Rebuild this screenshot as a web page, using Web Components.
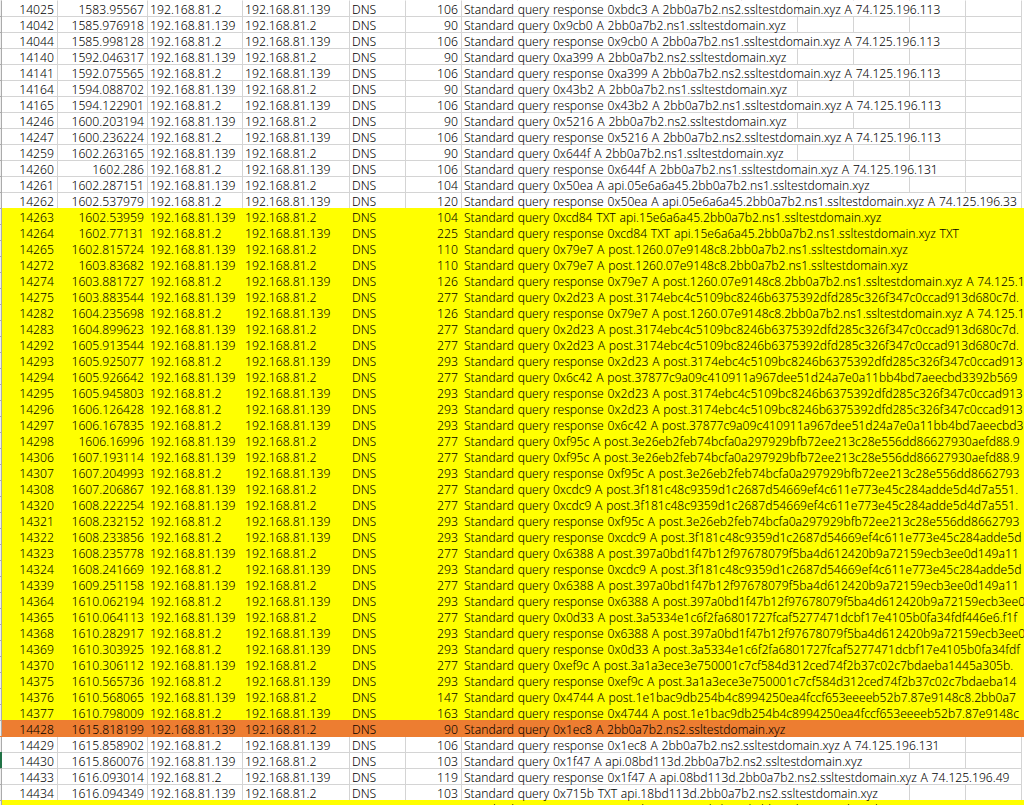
<!DOCTYPE html>
<html><head><meta charset="utf-8"><style>
html,body{margin:0;padding:0;height:805px;overflow:hidden;background:#fff}
body{font:300 12.2px/16px "Noto Sans","Liberation Sans",sans-serif;color:#000}
</style></head><body>
<packet-sheet></packet-sheet>
<script>
const Z={n1:'2bb0a7b2.ns1.ssltestdomain.xyz',n2:'2bb0a7b2.ns2.ssltestdomain.xyz'};
const P2D='post.3174ebc4c5109bc8246b6375392dfd285c326f347c0ccad913',
 P6C='post.37877c9a09c410911a967dee51d24a7e0a11bb4bd7aeecbd3',
 PF9='post.3e26eb2feb74bcfa0a297929bfb72ee213c28e556dd8662793',
 PCD='post.3f181c48c9359d1c2687d54669ef4c611e773e45c284adde5d',
 P63='post.397a0bd1f47b12f97678079f5ba4d612420b9a72159ecb3ee0',
 P0D='post.3a5334e1c6f2fa6801727fcaf5277471dcbf17e4105b0fa34fdf',
 PEF='post.3a1a3ece3e750001c7cf584d312ced74f2b37c02c7bdaeba14',
 P47='post.1e1bac9db254b4c8994250ea4fccf653eeeeb52b7.87e9148c',
 P79='post.1260.07e9148c8.2bb0a7b2.ns1.ssltestdomain.xyz';
/* no, time, kind (q/r), length, rest of the info text, fill */
const ROWS=[
[14025,'1583.95567','r',106,`0xbdc3 A ${Z.n2} A 74.125.196.113`],
[14042,'1585.976918','q',90,`0x9cb0 A ${Z.n1}`],
[14044,'1585.998128','r',106,`0x9cb0 A ${Z.n1} A 74.125.196.113`],
[14140,'1592.046317','q',90,`0xa399 A ${Z.n2}`],
[14141,'1592.075565','r',106,`0xa399 A ${Z.n2} A 74.125.196.113`],
[14164,'1594.088702','q',90,`0x43b2 A ${Z.n1}`],
[14165,'1594.122901','r',106,`0x43b2 A ${Z.n1} A 74.125.196.113`],
[14246,'1600.203194','q',90,`0x5216 A ${Z.n2}`],
[14247,'1600.236224','r',106,`0x5216 A ${Z.n2} A 74.125.196.113`],
[14259,'1602.263165','q',90,`0x644f A ${Z.n1}`],
[14260,'1602.286','r',106,`0x644f A ${Z.n1} A 74.125.196.131`],
[14261,'1602.287151','q',104,`0x50ea A api.05e6a6a45.${Z.n1}`],
[14262,'1602.537979','r',120,`0x50ea A api.05e6a6a45.${Z.n1} A 74.125.196.33`],
[14263,'1602.53959','q',104,`0xcd84 TXT api.15e6a6a45.${Z.n1}`,'y'],
[14264,'1602.77131','r',225,`0xcd84 TXT api.15e6a6a45.${Z.n1} TXT`,'y'],
[14265,'1602.815724','q',110,`0x79e7 A ${P79}`,'y'],
[14272,'1603.83682','q',110,`0x79e7 A ${P79}`,'y'],
[14274,'1603.881727','r',126,`0x79e7 A ${P79} A 74.125.1`,'y'],
[14275,'1603.883544','q',277,`0x2d23 A ${P2D}d680c7d.`,'y'],
[14282,'1604.235698','r',126,`0x79e7 A ${P79} A 74.125.1`,'y'],
[14283,'1604.899623','q',277,`0x2d23 A ${P2D}d680c7d.`,'y'],
[14292,'1605.913544','q',277,`0x2d23 A ${P2D}d680c7d.`,'y'],
[14293,'1605.925077','r',293,`0x2d23 A ${P2D}`,'y'],
[14294,'1605.926642','q',277,`0x6c42 A ${P6C}392b569`,'y'],
[14295,'1605.945803','r',293,`0x2d23 A ${P2D}`,'y'],
[14296,'1606.126428','r',293,`0x2d23 A ${P2D}`,'y'],
[14297,'1606.167835','r',293,`0x6c42 A ${P6C}`,'y'],
[14298,'1606.16996','q',277,`0xf95c A ${PF9}0aefd88.9`,'y'],
[14306,'1607.193114','q',277,`0xf95c A ${PF9}0aefd88.9`,'y'],
[14307,'1607.204993','r',293,`0xf95c A ${PF9}`,'y'],
[14308,'1607.206867','q',277,`0xcdc9 A ${PCD}4d7a551.`,'y'],
[14320,'1608.222254','q',277,`0xcdc9 A ${PCD}4d7a551.`,'y'],
[14321,'1608.232152','r',293,`0xf95c A ${PF9}`,'y'],
[14322,'1608.233856','r',293,`0xcdc9 A ${PCD}`,'y'],
[14323,'1608.235778','q',277,`0x6388 A ${P63}d149a11`,'y'],
[14324,'1608.241669','r',293,`0xcdc9 A ${PCD}`,'y'],
[14339,'1609.251158','q',277,`0x6388 A ${P63}d149a11`,'y'],
[14364,'1610.062194','r',293,`0x6388 A ${P63}`,'y'],
[14365,'1610.064113','q',277,`0x0d33 A ${P0D}446e6.f1f`,'y'],
[14368,'1610.282917','r',293,`0x6388 A ${P63}`,'y'],
[14369,'1610.303925','r',293,`0x0d33 A ${P0D}`,'y'],
[14370,'1610.306112','q',277,`0xef9c A ${PEF}45a305b.`,'y'],
[14375,'1610.565736','r',293,`0xef9c A ${PEF}`,'y'],
[14376,'1610.568065','q',147,`0x4744 A ${P47}8.2bb0a7`,'y'],
[14377,'1610.798009','r',163,`0x4744 A ${P47}`,'y'],
[14428,'1615.818199','q',90,`0x1ec8 A ${Z.n2}`,'o'],
[14429,'1615.858902','r',106,`0x1ec8 A ${Z.n2} A 74.125.196.131`],
[14430,'1615.860076','q',103,`0x1f47 A api.08bd113d.${Z.n2}`,'','sel'],
[14433,'1616.093014','r',119,`0x1f47 A api.08bd113d.${Z.n2} A 74.125.196.49`],
[14434,'1616.094349','q',103,`0x715b TXT api.18bd113d.${Z.n2}`],
[null,'','r',null,`0x715b TXT api.18bd113d.${Z.n2} TXT`,'y'],
];

const rowTpl=document.createElement('template');
rowTpl.innerHTML=`<style>
:host{display:grid;height:16px;position:relative;
 grid-template-rows:16px;
 grid-template-columns:2px 56px 90px 95px 107px 56px 56px repeat(10,56px);
 --bg:#fff;--line:#d4d4d4;--top:#d4d4d4;background:var(--bg);white-space:nowrap}
:host([first]){--top:transparent}
:host([fill=y]){--bg:#ff0;--line:transparent;--top:transparent}
:host([fill=o]){--bg:#ed7d31;--line:transparent;--top:transparent;box-shadow:0 1px #ed7d31;z-index:1}
.h{background:#efefef;border-right:1px solid #ababab;border-top:1px solid #ababab;box-sizing:border-box}
:host([first]) .h{border-top-color:transparent}
:host([sel]) .h{background:#217346;border-color:#217346}
.c{box-sizing:border-box;min-width:0;border-right:1px solid var(--line);border-top:1px solid var(--top);line-height:15px;padding:1px 2px 0}
.r{text-align:right;padding-right:3px}
.info{position:relative}
.info span{position:absolute;left:2px;top:0;height:15px;line-height:17px;background:var(--bg);z-index:1;font-size:12.1px;word-spacing:.6px}
</style><div class="h"></div><div class="c r" id="no"></div><div class="c r" id="t"></div><div class="c" id="s"></div><div class="c" id="d"></div><div class="c" id="p"></div><div class="c r" id="l"></div><div class="c info"><span id="i"></span></div><div class="c"></div><div class="c"></div><div class="c"></div><div class="c"></div><div class="c"></div><div class="c"></div><div class="c"></div><div class="c"></div><div class="c"></div>`;
customElements.define('packet-row',class extends HTMLElement{
 constructor(){super();this.attachShadow({mode:'open'}).append(rowTpl.content.cloneNode(true))}
 set data(v){const $=i=>this.shadowRoot.getElementById(i);const[no,t,k,len,info]=v;
  $('i').textContent='Standard query '+(k=='r'?'response ':'')+info;
  if(no===null)return; /* the row cut by the window's edge shows only the tips of its tallest letters */
  const a='192.168.81.139',b='192.168.81.2';
  $('no').textContent=no;$('t').textContent=t;$('s').textContent=k=='q'?a:b;$('d').textContent=k=='q'?b:a;
  $('p').textContent='DNS';$('l').textContent=len;}
});
customElements.define('packet-sheet',class extends HTMLElement{
 constructor(){super();const s=this.attachShadow({mode:'open'});
  s.innerHTML='<style>:host{display:block;height:805px;width:1024px;overflow:hidden}</style><slot></slot>';
  ROWS.forEach((r,i)=>{const e=document.createElement('packet-row');if(!i)e.setAttribute('first','');if(r[5])e.setAttribute('fill',r[5]);if(r[6])e.setAttribute('sel','');e.data=r;this.append(e)})}
});
</script></body></html>
